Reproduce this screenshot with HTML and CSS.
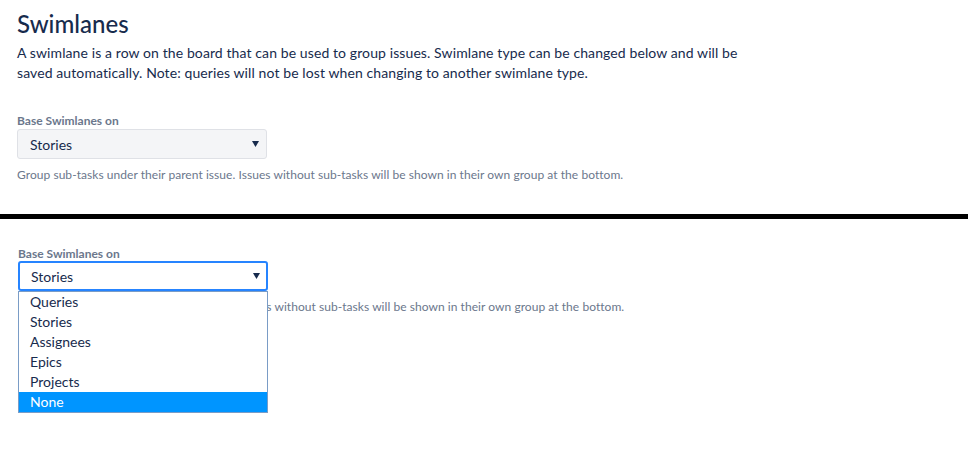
FILE: index.html
```html
<!DOCTYPE html>
<html lang="en">
<head>
    <meta charset="UTF-8">
    <meta name="viewport" content="width=device-width, initial-scale=1.0">
    <title>Swimlanes</title>
    <link rel="stylesheet" href="styles.css">
</head>
<body>
    <div class="panel">
        <h1>Swimlanes</h1>
        <p class="intro">A swimlane is a row on the board that can be used to group issues. Swimlane type can be changed below and will be saved automatically. Note: queries will not be lost when changing to another swimlane type.</p>
        <div class="field">
            <label class="field-label">Base Swimlanes on</label>
            <div class="select">
                <span>Stories</span>
                <svg class="arrow" width="7" height="6" viewBox="0 0 7 6"><polygon points="0,0 7,0 3.5,6" fill="#172b4d"/></svg>
            </div>
            <div class="help">Group sub-tasks under their parent issue. Issues without sub-tasks will be shown in their own group at the bottom.</div>
        </div>
    </div>

    <div class="divider"></div>

    <div class="panel panel-open">
        <div class="field">
            <label class="field-label">Base Swimlanes on</label>
            <div class="dropdown">
                <div class="select select-focus">
                    <span>Stories</span>
                    <svg class="arrow" width="7" height="6" viewBox="0 0 7 6"><polygon points="0,0 7,0 3.5,6" fill="#172b4d"/></svg>
                </div>
                <ul class="options">
                    <li>Queries</li>
                    <li>Stories</li>
                    <li>Assignees</li>
                    <li>Epics</li>
                    <li>Projects</li>
                    <li class="selected">None</li>
                </ul>
            </div>
            <div class="help">Group sub-tasks under their parent issue. Issues without sub-tasks will be shown in their own group at the bottom.</div>
        </div>
    </div>
</body>
</html>
```

FILE: styles.css
```css
body {
    margin: 0;
    min-height: 100vh;
    font-family: Lato, "Noto Sans", sans-serif;
    color: #172b4d;
    background-color: white;
}
.panel {
    padding: 10px 17px 0;
}
h1 {
    font-size: 24px;
    font-weight: 500;
    line-height: 28px;
    margin: 0 0 5px;
}
.intro {
    font-size: 14px;
    line-height: 20px;
    letter-spacing: 0.1px;
    max-width: 740px;
    margin: 0 0 30px;
}
.field-label {
    display: block;
    font-size: 12px;
    font-weight: bold;
    line-height: 16px;
    color: #6b778c;
}
.select {
    width: 250px;
    height: 30px;
    box-sizing: border-box;
    display: flex;
    align-items: center;
    justify-content: space-between;
    padding: 0 6px 0 12px;
    font-size: 14px;
    background-color: #f4f5f7;
    border: 1px solid #dfe1e6;
    border-radius: 3px;
}
.arrow {
    display: block;
    margin-right: 1px;
}
.help {
    margin-top: 8px;
    font-size: 12px;
    line-height: 16px;
    letter-spacing: 0.05px;
    color: #6b778c;
}
.divider {
    height: 5px;
    margin-top: 31px;
    background-color: black;
}
.panel-open {
    padding-top: 27px;
    padding-left: 18px;
}
.panel-open .field-label {
    margin-bottom: -1px;
}
.dropdown {
    position: relative;
}
.select-focus {
    background-color: white;
    border: 2px solid #2684ff;
    padding-left: 11px;
    padding-right: 5px;
}
.options {
    position: absolute;
    top: 30px;
    left: 0;
    width: 250px;
    box-sizing: border-box;
    margin: 0;
    padding: 0;
    list-style: none;
    background-color: white;
    border: 1px solid #7a9cc6;
    font-size: 14px;
}
.options li {
    height: 20px;
    line-height: 20px;
    padding-left: 11px;
}
.options li.selected {
    background-color: #0095ff;
    color: white;
}
```
